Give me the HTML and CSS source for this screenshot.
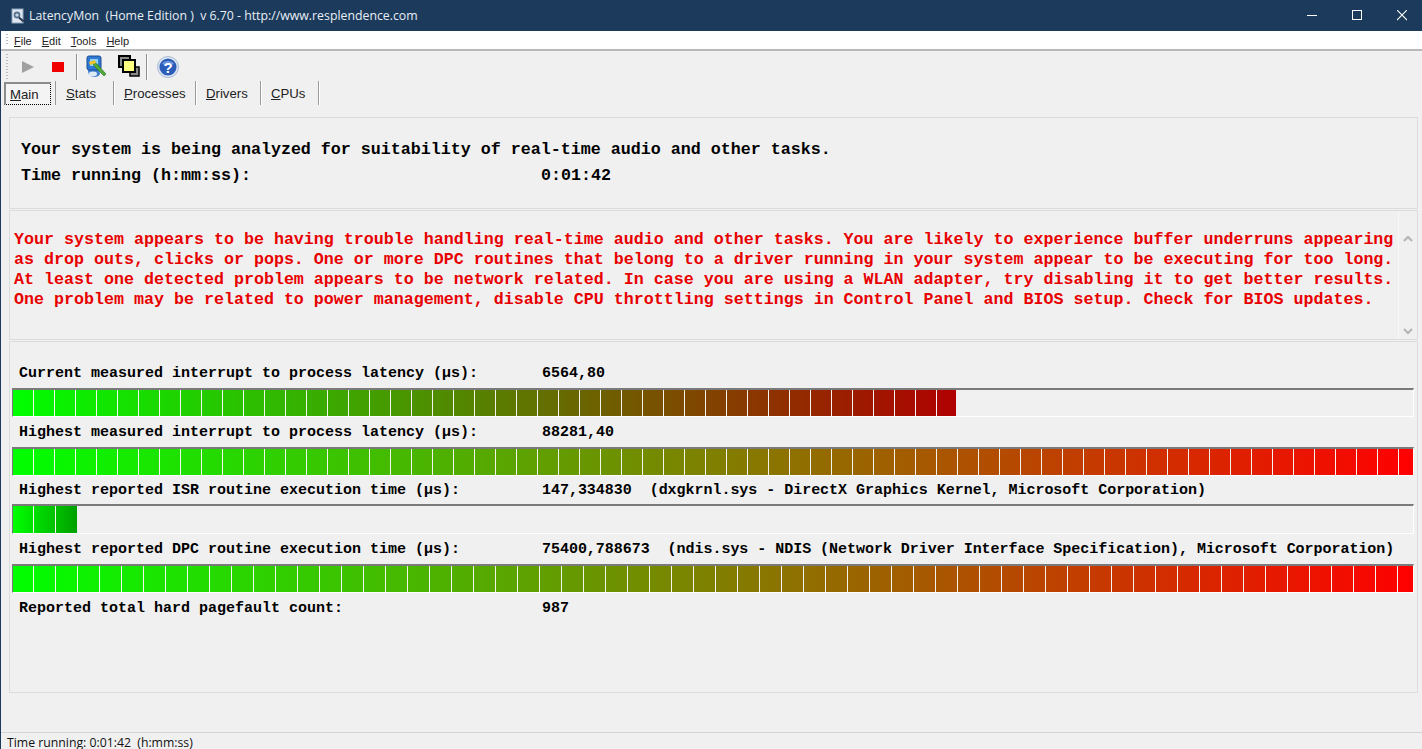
FILE: index.html
```html
<!DOCTYPE html>
<html lang="en">
<head>
<meta charset="utf-8">
<title>LatencyMon</title>
<link rel="stylesheet" href="styles.css">
</head>
<body>
<div class="window">
  <header class="titlebar">
    <svg class="app-icon" width="16" height="16" viewBox="0 0 16 16"><rect x="2" y="1" width="11" height="14" fill="#dfe8f2" stroke="#8fa6bd"/><circle cx="7" cy="7" r="3.4" fill="#5d7590"/><circle cx="7" cy="7" r="1.6" fill="#c9d8e6"/><path d="M9 9.5l4.5 4" stroke="#26384c" stroke-width="2"/></svg>
    <span class="title-text">LatencyMon  (Home Edition )  v 6.70 - http://www.resplendence.com</span>
    <div class="win-controls">
      <svg width="10" height="11" viewBox="0 0 10 11"><path d="M0 5.5h10" stroke="#fff"/></svg>
      <svg width="10" height="11" viewBox="0 0 10 11"><rect x=".5" y=".5" width="9" height="9" fill="none" stroke="#fff"/></svg>
      <svg width="10" height="11" viewBox="0 0 10 11"><path d="M0 0l10 10M10 0L0 10" stroke="#fff" stroke-width="1.1"/></svg>
    </div>
  </header>
  <nav class="menubar">
    <span class="grip"></span>
    <span class="menu-item"><u>F</u>ile</span>
    <span class="menu-item"><u>E</u>dit</span>
    <span class="menu-item"><u>T</u>ools</span>
    <span class="menu-item"><u>H</u>elp</span>
  </nav>
  <div class="toolbar">
    <span class="grip grip-bar"></span>
    <svg class="tool tool-play" width="14" height="14" viewBox="0 0 14 14"><path d="M1 1l12 6-12 6z" fill="#a0a0a0"/></svg>
    <svg class="tool tool-stop" width="12" height="10" viewBox="0 0 12 10"><rect width="12" height="10" fill="#f00000"/></svg>
    <span class="tool-sep sep-a"></span>
    <svg class="tool tool-mon" width="24" height="24" viewBox="0 0 24 24"><path d="M3 15c0 5 3 7 6 7s6-1 6-4l-2-4z" fill="#3f7fd0"/><ellipse cx="8" cy="19" rx="4" ry="2.4" fill="#dfeaf7"/><rect x="2" y="1" width="14" height="14" rx="2" fill="#2f79d6" stroke="#1c4d94"/><rect x="5" y="4" width="8" height="7" fill="#8fd0f5"/><path d="M7 6l5 3 9 10-2 2-10-10z" fill="#4fa83a" stroke="#2c6e1f" stroke-width=".6"/><path d="M4 7l6-2 1 3-6 2z" fill="#f2c230"/></svg>
    <svg class="tool tool-win" width="23" height="23" viewBox="0 0 23 23"><rect x="1" y="1" width="11" height="11" fill="#8a8a8a" stroke="#000" stroke-width="2"/><rect x="12" y="12" width="9" height="9" fill="#8a8a8a" stroke="#000" stroke-width="1.5"/><rect x="5" y="5" width="12" height="12" fill="#ffff80" stroke="#000" stroke-width="2"/></svg>
    <span class="tool-sep sep-b"></span>
    <svg class="tool tool-help" width="22" height="22" viewBox="0 0 22 22"><circle cx="11" cy="11" r="10.5" fill="#dfe7f3" stroke="#a9b9d2"/><circle cx="11" cy="11" r="8.6" fill="#2a5cb8"/><path d="M5 8a6.5 5 0 0 1 12 0a8 3.5 0 0 1-12 0z" fill="#6f97dc"/><text x="11" y="16.5" class="help-mark" text-anchor="middle">?</text></svg>
  </div>
  <div class="tabs">
    <span class="tab tab-active"><u>M</u>ain</span>
    <span class="tab tab-stats"><u>S</u>tats</span>
    <span class="tab tab-proc"><u>P</u>rocesses</span>
    <span class="tab tab-drv"><u>D</u>rivers</span>
    <span class="tab tab-cpu"><u>C</u>PUs</span>
  </div>
  <main class="content">
    <section class="panel panel-top">
      <p class="big-line">Your system is being analyzed for suitability of real-time audio and other tasks.</p>
      <p class="big-line big-row"><span class="big-label">Time running (h:mm:ss):</span><span>0:01:42</span></p>
    </section>
    <section class="panel panel-msg">
      <p class="msg">Your system appears to be having trouble handling real-time audio and other tasks. You are likely to experience buffer underruns appearing
as drop outs, clicks or pops. One or more DPC routines that belong to a driver running in your system appear to be executing for too long.
At least one detected problem appears to be network related. In case you are using a WLAN adapter, try disabling it to get better results.
One problem may be related to power management, disable CPU throttling settings in Control Panel and BIOS setup. Check for BIOS updates.</p>
      <div class="scroll">
        <svg width="10" height="7" viewBox="0 0 10 7"><path d="M1 6l4-4 4 4" fill="none" stroke="#b4b4b4" stroke-width="2"/></svg>
        <svg width="10" height="7" viewBox="0 0 10 7"><path d="M1 1l4 4 4-4" fill="none" stroke="#b4b4b4" stroke-width="2"/></svg>
      </div>
    </section>
    <section class="panel panel-metrics">
      <div class="row"><span class="row-label">Current measured interrupt to process latency (µs):</span><span>6564,80</span></div>
      <div class="bar"><div class="fill fill-current"></div></div>
      <div class="row"><span class="row-label">Highest measured interrupt to process latency (µs):</span><span>88281,40</span></div>
      <div class="bar bar-short"><div class="fill fill-full"></div></div>
      <div class="row row-tight"><span class="row-label">Highest reported ISR routine execution time (µs):</span><span class="row-detail">147,334830  (dxgkrnl.sys - DirectX Graphics Kernel, Microsoft Corporation)</span></div>
      <div class="bar bar-tall"><div class="fill fill-isr"></div></div>
      <div class="row"><span class="row-label">Highest reported DPC routine execution time (µs):</span><span class="row-detail">75400,788673  (ndis.sys - NDIS (Network Driver Interface Specification), Microsoft Corporation)</span></div>
      <div class="bar"><div class="fill fill-dpc"></div></div>
      <div class="row"><span class="row-label">Reported total hard pagefault count:</span><span>987</span></div>
    </section>
  </main>
  <footer class="status">Time running: 0:01:42  (h:mm:ss)</footer>
</div>
</body>
</html>
```
FILE: styles.css
```css
* { box-sizing: border-box; }
html, body { margin: 0; height: 100%; overflow: hidden; }
body { background: #f0f0f0; color: #000; font-family: "Liberation Sans", Arial, sans-serif; }
p { margin: 0; }
.window { width: 1422px; height: 749px; display: flex; flex-direction: column; border-left: 1px solid #1b3a5c; }

.titlebar { height: 31px; margin-left: -1px; background: #1b3a5c; color: #e8eef4; display: flex; align-items: center; padding-left: 10px; flex: none; }
.app-icon { flex: none; }
.title-text { margin-left: 3px; font: 12.3px "Open Sans", sans-serif; white-space: pre; }
.win-controls { margin-left: auto; display: flex; gap: 35px; padding-right: 15px; }

.menubar { height: 20px; flex: none; background: #fff; border-bottom: 2px solid #b9b9b9; display: flex; align-items: center; padding: 2px 0 0 13px; font-size: 11px; gap: 10px; position: relative; color: #222; }
.menu-item { white-space: pre; }
.grip { position: absolute; left: 5px; top: 3px; bottom: 3px; width: 2px; background: repeating-linear-gradient(#bbb 0 1px, transparent 1px 3px); }

.toolbar { height: 31px; flex: none; display: flex; align-items: center; position: relative; padding-left: 20px; }
.grip-bar { top: 3px; bottom: 3px; }
.tool { flex: none; }
.tool-stop { margin-left: 17px; }
.tool-sep { width: 1px; height: 26px; background: #8f8f8f; box-shadow: 1px 0 #fff; flex: none; }
.sep-a { margin-left: 12px; }
.tool-mon { margin-left: 8px; }
.tool-win { margin-left: 9px; }
.sep-b { margin-left: 5px; }
.tool-help { margin-left: 10px; }
.help-mark { font: bold 15px "Liberation Sans", sans-serif; fill: #fff; }

.tabs { height: 26px; flex: none; display: flex; align-items: flex-start; font-size: 13.2px; padding-left: 3px; margin-top: -1px; color: #222; }
.tab { height: 24px; line-height: 26px; border-right: 1px solid #9a9a9a; box-shadow: 1px 0 #fff; flex: none; padding: 0 10px; }
.tab-active { width: 47px; padding: 0 4px; border: 1px dotted #000; border-top: 2px solid #8c8c8c; border-left: 2px solid #8c8c8c; background: #f4f4f4; box-shadow: none; height: 23px; margin-right: 4px; margin-top: 1px; line-height: 22px; }
.tab-active + .tab { border-left: 1px solid #9a9a9a; padding-left: 10px; }
.tab-stats { width: 59px; }
.tab-proc { width: 82px; }
.tab-drv { width: 65px; }
.tab-cpu { width: 58px; }

.content { flex: 1; padding: 10px 4px 0 8px; display: flex; flex-direction: column; gap: 1px; }
.panel { border: 1px solid #dcdcdc; flex: none; font-family: "Liberation Mono", "Courier New", monospace; font-weight: bold; }
.panel-top { height: 92px; padding: 19px 0 0 11px; font-size: 16.67px; line-height: 26px; }
.big-row { display: flex; white-space: pre; }
.big-label { width: 520px; }
.panel-msg { height: 130px; position: relative; padding: 19px 0 0 4px; }
.msg { color: #e80000; font-size: 16.67px; line-height: 20px; white-space: pre; }
.scroll { position: absolute; right: 0; top: 0; bottom: 0; width: 19px; border-left: 1px solid #f8f8f8; display: flex; flex-direction: column; justify-content: space-between; align-items: center; padding: 24px 0 4px; }
.panel-metrics { height: 352px; padding: 23px 0 0 2px; font-size: 15px; }
.row { height: 18px; line-height: 18px; display: flex; white-space: pre; padding-left: 7px; margin: 0 0 5px; }
.row-tight { margin-bottom: 4px; }
.row-label { width: 523px; flex: none; }
.row-detail { letter-spacing: -0.03px; }
.bar { width: 1402px; height: 29px; margin-bottom: 7px; border-top: 2px solid #7a7a7a; border-left: 1px solid #7a7a7a; border-bottom: 1px solid #fff; border-right: 1px solid #fff; }
.bar-short { margin-bottom: 6px; }
.bar-tall { height: 30px; }
.fill { height: 100%; }
.fill-current { width: 943px; background:
  repeating-linear-gradient(90deg, transparent 0 20px, #f4f4f0 20px 21px),
  linear-gradient(90deg, #00ff00, #b00000); }
.fill-full { width: 100%; background:
  repeating-linear-gradient(90deg, transparent 0 20px, #f4f4f0 20px 21px),
  linear-gradient(90deg, #00ff00, #ff0000); }
.fill-isr { width: 64px; background:
  repeating-linear-gradient(90deg, transparent 0 20px, #f4f4f0 20px 21px, transparent 21px 22px),
  linear-gradient(90deg, #00ff00, #00a000); }
.fill-dpc { width: 100%; background:
  repeating-linear-gradient(90deg, transparent 0 20px, #f4f4f0 20px 21px, transparent 21px 22px),
  linear-gradient(90deg, #00ff00, #ff0000); }

.status { height: 17px; flex: none; border-top: 1px solid #d4d4d4; font: 12.25px "Open Sans", sans-serif; line-height: 20px; padding-left: 6px; white-space: pre; color: #111; }
```
